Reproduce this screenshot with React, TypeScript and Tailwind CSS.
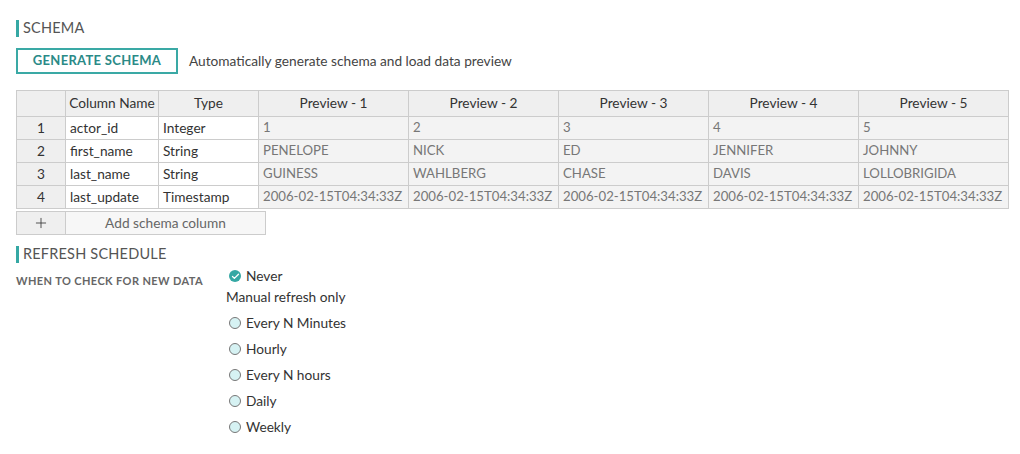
import { Check, Plus } from 'lucide-react';

const previews = [
  ['1', '2', '3', '4', '5'],
  ['PENELOPE', 'NICK', 'ED', 'JENNIFER', 'JOHNNY'],
  ['GUINESS', 'WAHLBERG', 'CHASE', 'DAVIS', 'LOLLOBRIGIDA'],
  Array(5).fill('2006-02-15T04:34:33Z'),
];

const columns = [
  { name: 'actor_id', type: 'Integer' },
  { name: 'first_name', type: 'String' },
  { name: 'last_name', type: 'String' },
  { name: 'last_update', type: 'Timestamp' },
];

const schedules = ['Every N Minutes', 'Hourly', 'Every N hours', 'Daily', 'Weekly'];

const SectionTitle = ({ children }: { children: string }) => (
  <div className="flex items-center h-[17px]">
    <div className="w-[3px] h-[17px] bg-[#35a8a4]" />
    <span className="ml-[4px] text-[14.5px] leading-none text-[#555] tracking-[0.2px]">{children}</span>
  </div>
);

export default function App() {
  return (
    <div className="w-[1020px] h-[454px] bg-white px-4 pt-[20px] font-['Lato',sans-serif] text-[#444]">
      <SectionTitle>SCHEMA</SectionTitle>

      <div className="flex items-center mt-[11px]">
        <button className="w-[162px] h-[26px] border-2 border-[#3aa9a5] text-[13px] font-bold text-[#2b8a87] tracking-[0.3px]">
          GENERATE SCHEMA
        </button>
        <span className="ml-[11px] text-[13.7px] text-[#444]">Automatically generate schema and load data preview</span>
      </div>

      <table className="w-[992px] mt-[16px] border-collapse text-[13.7px] table-fixed">
        <colgroup>
          <col className="w-[49px]" />
          <col className="w-[93px]" />
          <col className="w-[100px]" />
          <col className="w-[150px]" />
          <col className="w-[150px]" />
          <col className="w-[150px]" />
          <col className="w-[150px]" />
          <col className="w-[150px]" />
        </colgroup>
        <thead>
          <tr className="h-[26px] bg-[#efefef] text-[#333]">
            <th className="border border-[#ccc] font-normal" />
            <th className="border border-[#ccc] font-normal whitespace-nowrap">Column Name</th>
            <th className="border border-[#ccc] font-normal">Type</th>
            {[1, 2, 3, 4, 5].map((n) => (
              <th key={n} className="border border-[#ccc] font-normal">Preview - {n}</th>
            ))}
          </tr>
        </thead>
        <tbody>
          {columns.map((c, i) => (
            <tr key={c.name} className="h-[23px]">
              <td className="border border-[#ccc] bg-[#efefef] text-center text-[#333]">{i + 1}</td>
              <td className="border border-[#ccc] bg-white px-[4px] text-[#333]">{c.name}</td>
              <td className="border border-[#ccc] bg-white px-[4px] text-[#333]">{c.type}</td>
              {previews[i].map((v, j) => (
                <td key={j} className="border border-[#ccc] bg-[#f3f3f3] px-[4px] text-[13.2px] text-[#777] whitespace-nowrap overflow-hidden">
                  {v}
                </td>
              ))}
            </tr>
          ))}
        </tbody>
      </table>

      <div className="flex mt-[2px] h-[24px] w-[250px] border border-[#ccc] text-[13.7px]">
        <div className="w-[49px] bg-[#efefef] border-r border-[#ccc] flex items-center justify-center text-[#333]">
          <Plus size={16} strokeWidth={1.25} />
        </div>
        <div className="flex-1 bg-[#f7f7f7] flex items-center justify-center text-[#666]">Add schema column</div>
      </div>

      <div className="mt-[11px]">
        <SectionTitle>REFRESH SCHEDULE</SectionTitle>
      </div>

      <div className="flex mt-[3px]">
        <div className="w-[210px] pt-[7px] text-[11px] font-bold tracking-[0.4px] text-[#666]">WHEN TO CHECK FOR NEW DATA</div>
        <div className="flex flex-col text-[13.7px] text-[#333]">
          <div className="flex items-center h-[20px] ml-[3px]">
            <span className="w-[12px] h-[12px] rounded-full bg-[#35a8a4] flex items-center justify-center">
              <Check size={9} strokeWidth={3.5} className="text-white" />
            </span>
            <span className="ml-[5px]">Never</span>
          </div>
          <div className="h-[20px] flex items-center mt-[1px]">Manual refresh only</div>
          {schedules.map((s) => (
            <div key={s} className="flex items-center h-[20px] ml-[3px] mt-[6px]">
              <span className="w-[12px] h-[12px] rounded-full bg-[#d6f2f3] border border-[#777]" />
              <span className="ml-[5px]">{s}</span>
            </div>
          ))}
        </div>
      </div>
    </div>
  );
}
